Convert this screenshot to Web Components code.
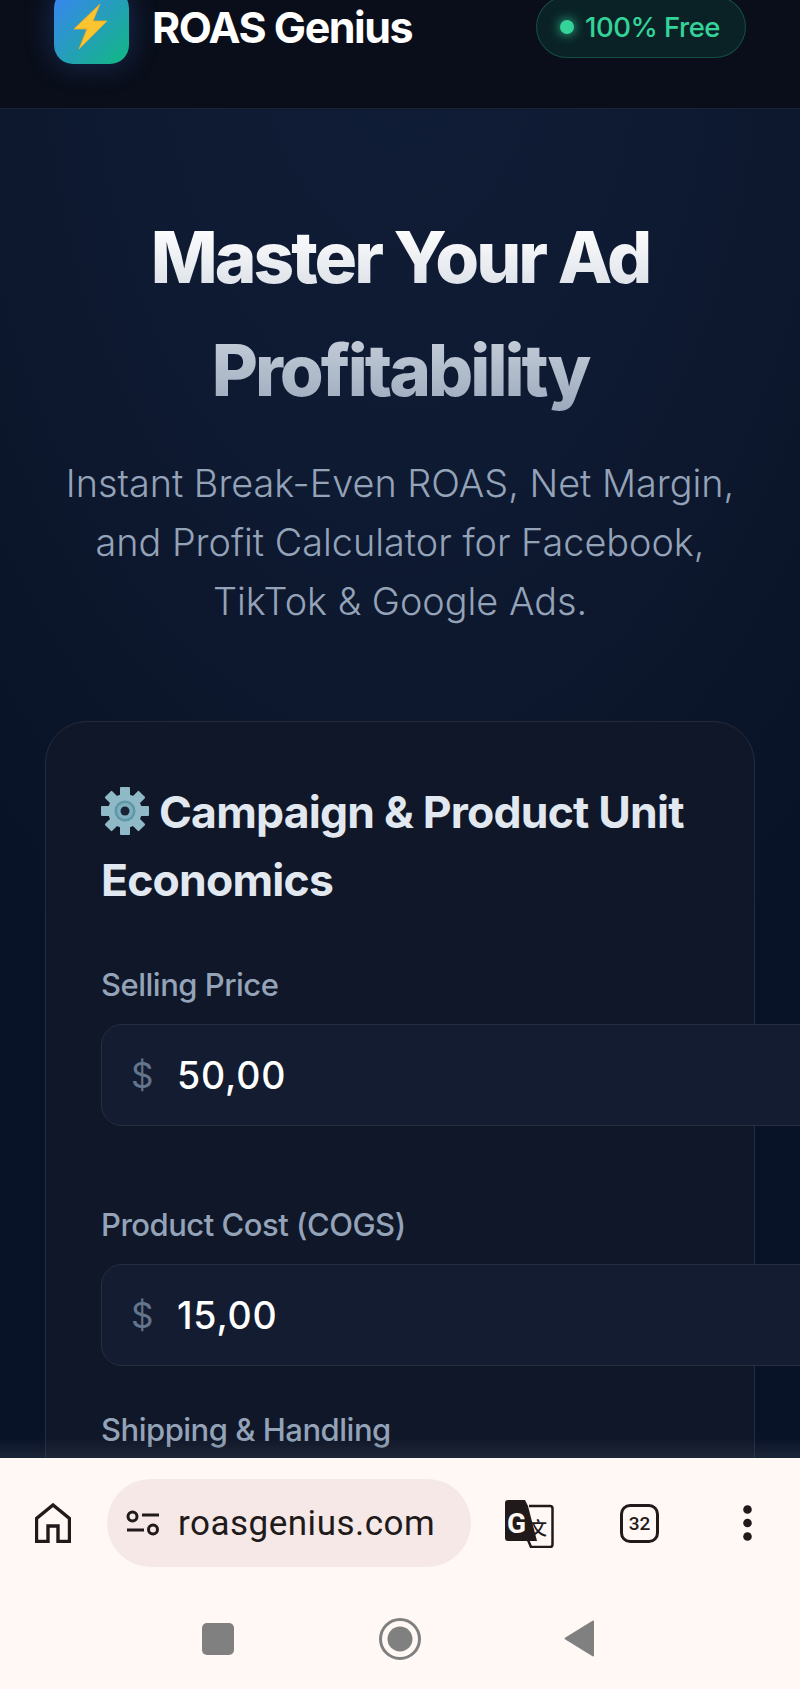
<!DOCTYPE html>
<html lang="en">
<head>
<meta charset="utf-8">
<title>ROAS Genius</title>
<style>
  html, body { margin: 0; height: 100%; background: #0a0e1a; }
  body { font-family: Inter, "Liberation Sans", sans-serif; overflow: hidden; }
  roas-app { height: 1689px; }
</style>
</head>
<body>
<roas-app>
  <roas-header slot="page" name="ROAS Genius" badge="100% Free"></roas-header>
  <roas-hero slot="page">
    <span slot="title">Master Your Ad Profitability</span>
    Instant Break-Even ROAS, Net Margin, and Profit Calculator for Facebook, TikTok &amp; Google Ads.
  </roas-hero>
  <roas-card slot="page">
    <span slot="title">Campaign &amp; Product Unit Economics</span>
    <roas-field label="Selling Price" value="50,00" hint></roas-field>
    <roas-field label="Product Cost (COGS)" value="15,00"></roas-field>
    <roas-field label="Shipping &amp; Handling"></roas-field>
  </roas-card>
  <browser-bar slot="chrome" url="roasgenius.com" tabs="32"></browser-bar>
  <system-nav slot="chrome"></system-nav>
</roas-app>

<script>
const define = (name, html, setup) => {
  const tpl = document.createElement('template')
  tpl.innerHTML = html
  customElements.define(name, class extends HTMLElement {
    constructor () {
      super()
      this.attachShadow({ mode: 'open' }).appendChild(tpl.content.cloneNode(true))
    }
    connectedCallback () {
      if (setup) setup(this, this.shadowRoot)
    }
  })
}

define('roas-app', `
<style>
  :host { display: flex; flex-direction: column; width: 800px; overflow: hidden; }
  .page {
    flex: 1; min-height: 0; overflow: hidden;
    background: radial-gradient(ellipse 640px 1100px at 50% 0, #101d36 0, #0e1a32 45%, #0c162b 75%, #091328 100%);
  }
  .chrome { position: relative; background: #fff8f5; }
  .chrome::before {
    content: ""; position: absolute; left: 0; right: 0; top: -20px; height: 20px;
    background: linear-gradient(180deg, rgba(60,68,84,0), rgba(60,68,84,.36));
  }
</style>
<div class="page"><slot name="page"></slot></div>
<div class="chrome"><slot name="chrome"></slot></div>
`)

define('roas-header', `
<style>
  :host {
    display: flex; align-items: center; justify-content: space-between;
    box-sizing: border-box; height: 119px; margin-top: -10px;
    padding: 0 54px 44px 54px;
    background: #0a0e1a; border-bottom: 1px solid #1a2233;
  }
  .brand { display: flex; align-items: center; gap: 23px; }
  .logo {
    width: 75px; height: 75px; margin-bottom: 2px; border-radius: 19px; display: flex; align-items: center; justify-content: center;
    background: linear-gradient(135deg, #3b82f6, #10b981);
    box-shadow: 0 0 30px rgba(59,130,246,.28);
  }
  .name { font-size: 43px; font-weight: 700; letter-spacing: -1.5px; color: #fff; }
  .badge {
    display: flex; align-items: center; gap: 11px; box-sizing: border-box;
    width: 210px; height: 62px; padding-left: 23px; border-radius: 31px;
    background: rgba(16,185,129,.12); border: 1.5px solid rgba(52,211,153,.25);
    color: #34d399; font-size: 27.5px; font-weight: 500; letter-spacing: -.5px;
  }
  .dot { width: 14px; height: 14px; border-radius: 50%; background: #34d399; box-shadow: 0 0 12px #34d399; }
</style>
<div class="brand">
  <div class="logo">
    <svg width="50" height="50" viewBox="0 0 50 50"><path d="M33 3 7 28h13l-8 20 28-28H26z" fill="#fbc531" stroke="#f6a81c" stroke-width=".8" stroke-linejoin="round"/></svg>
  </div>
  <span class="name"></span>
</div>
<div class="badge"><span class="dot"></span><span class="text"></span></div>
`, (el, root) => {
  root.querySelector('.name').textContent = el.getAttribute('name')
  root.querySelector('.text').textContent = el.getAttribute('badge')
})

define('roas-hero', `
<style>
  :host { display: block; padding: 92px 60px 0; text-align: center; }
  h1 {
    margin: 0 auto; width: 560px; font-size: 71px; line-height: 113px; font-weight: 800; letter-spacing: -3px;
    background: linear-gradient(180deg, #ffffff 10%, #94a3b8 100%);
    -webkit-background-clip: text; background-clip: text; color: transparent;
  }
  p {
    margin: 27px -10px 0; font-size: 37.8px; line-height: 59px; font-weight: 300; letter-spacing: 0; color: #94a3b8;
  }
</style>
<h1><slot name="title"></slot></h1>
<p><slot></slot></p>
`)

define('roas-card', `
<style>
  :host {
    display: block; box-sizing: border-box; width: 710px; margin: 90px 0 0 45px; padding: 56px 55px 0;
    background: #0f1728; border: 1.5px solid #232c3d; border-radius: 42px; height: 900px;
  }
  h2 {
    display: block; margin: 0 0 51px; font-size: 44.5px; line-height: 68px; font-weight: 700; letter-spacing: -.8px; color: #e2e8f0;
  }
  svg { vertical-align: -7px; margin-right: 10px; }
</style>
<h2><svg width="48" height="48" viewBox="-24 -24 48 48">
  <g fill="#8fb9c6">
    <circle r="17"/>
    <rect x="-5" y="-24" width="10" height="48" rx="1"/>
    <rect x="-5" y="-24" width="10" height="48" rx="1" transform="rotate(45)"/>
    <rect x="-5" y="-24" width="10" height="48" rx="1" transform="rotate(90)"/>
    <rect x="-5" y="-24" width="10" height="48" rx="1" transform="rotate(135)"/>
  </g>
  <circle r="10.5" fill="#5f97a9"/>
  <circle r="8" fill="#7fb0bf"/>
  <circle r="4.5" fill="#1a2336"/>
</svg><slot name="title"></slot></h2>
<slot></slot>
`)

define('roas-field', `
<style>
  :host { display: block; margin-bottom: 44px; }
  :host([hint]) { margin-bottom: 79px; }
  label { display: block; font-size: 31px; line-height: 40px; font-weight: 500; letter-spacing: -.5px; color: #94a3b8; margin-bottom: 19px; }
  .input {
    display: flex; align-items: center; box-sizing: border-box; width: 720px; height: 102px; padding-left: 29px;
    background: #131c30; border: 1.5px solid #252e40; border-radius: 21px;
  }
  .cur { width: 46px; font-size: 35px; color: #64748b; }
  .val { font-size: 37.5px; font-weight: 500; letter-spacing: .8px; color: #fff; }
</style>
<label></label>
<div class="input"><span class="cur">$</span><span class="val"></span></div>
`, (el, root) => {
  root.querySelector('label').textContent = el.getAttribute('label')
  // the last field is cut off by the browser bar, so only its label shows
  if (el.hasAttribute('value')) root.querySelector('.val').textContent = el.getAttribute('value')
  else root.querySelector('.input').remove()
})

define('browser-bar', `
<style>
  :host {
    display: flex; align-items: center; height: 130px; box-sizing: border-box; padding: 0 0 0 35px;
    font-family: Roboto, "Liberation Sans", sans-serif; color: #211a1a;
  }
  .pill {
    display: flex; align-items: center; gap: 18px; box-sizing: border-box;
    width: 364px; height: 88px; margin-left: 36px; padding-left: 19px; border-radius: 44px; background: #f5e8e6;
  }
  .url { font-size: 35px; letter-spacing: .5px; }
  .tr { margin-left: 34px; }
  .tab {
    display: flex; align-items: center; justify-content: center; box-sizing: border-box;
    width: 39px; height: 39px; margin-left: 66px; border: 3.5px solid #211a1a; border-radius: 10px;
    font-size: 19px; font-weight: 500;
  }
  .more { margin-left: 84px; }
  svg { display: block; }
</style>
<svg width="36" height="40" viewBox="0 0 36 40"><path d="M1.5 38.5V15.5L18 2 34.500 15.500V38.500H23V23H13V38.500Z" fill="none" stroke="#211a1a" stroke-width="3.400"/></svg>
<div class="pill">
  <svg width="34" height="26" viewBox="0 0 34 26" fill="none" stroke="#211a1a" stroke-width="3">
    <circle cx="6.500" cy="6.500" r="4.500"/><path d="M16 5h17M1 20h17"/><circle cx="27" cy="19.500" r="4.500"/>
  </svg>
  <span class="url"></span>
</div>
<svg class="tr" width="49" height="49" viewBox="0 0 49 49">
  <path d="M24 7h21a2.500 2.500 0 0 1 2.500 2.500v36a2.500 2.500 0 0 1-2.500 2.500H26l-3-7" fill="#fff8f5" stroke="#211a1a" stroke-width="2.500"/>
  <path d="M3 1h17l3 6 9 35H3a3 3 0 0 1-3-3V4a3 3 0 0 1 3-3z" fill="#211a1a"/>
  <text x="2" y="34" font-family="Roboto, sans-serif" font-size="28" font-weight="700" fill="#fff8f5">G</text>
  <text x="24" y="36" font-family="'Noto Sans CJK SC', sans-serif" font-size="18" font-weight="500" fill="#211a1a">文</text>
</svg>
<div class="tab"></div>
<svg class="more" width="9" height="36" viewBox="0 0 9 36" fill="#211a1a"><circle cx="4.500" cy="4.500" r="4.300"/><circle cx="4.500" cy="18" r="4.300"/><circle cx="4.500" cy="31.500" r="4.300"/></svg>
`, (el, root) => {
  root.querySelector('.url').textContent = el.getAttribute('url')
  root.querySelector('.tab').textContent = el.getAttribute('tabs')
})

define('system-nav', `
<style>
  :host { display: flex; align-items: center; height: 101px; box-sizing: border-box; padding: 0 0 0 202px; }
  .sq { width: 32px; height: 32px; border-radius: 5px; background: #808080; }
  .home { margin-left: 144px; }
  .back { margin-left: 142px; }
  svg { display: block; }
</style>
<div class="sq"></div>
<svg class="home" width="44" height="44" viewBox="0 0 44 44"><circle cx="22" cy="22" r="19.500" fill="none" stroke="#808080" stroke-width="3"/><circle cx="22" cy="22" r="12.500" fill="#808080"/></svg>
<svg class="back" width="31" height="37" viewBox="0 0 31 37"><path d="M29 1.500v34L1.500 18.500z" fill="#808080" stroke="#808080" stroke-width="2" stroke-linejoin="round"/></svg>
`)
</script>
</body>
</html>
